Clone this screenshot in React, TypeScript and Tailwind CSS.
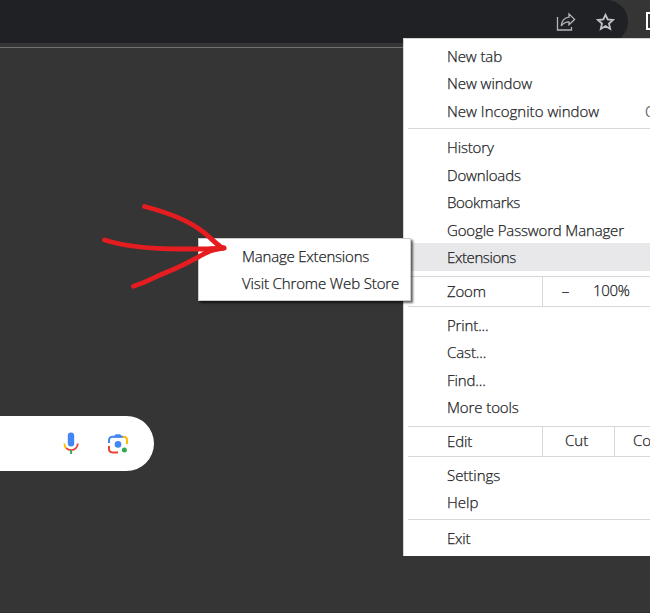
import type { ReactNode } from "react";

type ItemProps = { label: string; active?: boolean; raised?: boolean; tracking?: string; shortcut?: string };

function Item({ label, active, raised, tracking = "", shortcut }: ItemProps) {
  return (
    <div
      className={`flex h-[27.5px] shrink-0 items-center justify-between pl-[43px] ${raised ? "pb-[1.5px]" : ""} ${active ? "bg-[#e8e8ea] shadow-[0_-1px_0_#e8e8ea]" : ""}`}
    >
      <span className={tracking}>{label}</span>
      {shortcut && <span className="w-[5px] shrink-0 overflow-hidden text-[#777]">{shortcut}</span>}
    </div>
  );
}

function Group({ children, className }: { children: ReactNode; className: string }) {
  return <div className={`flex flex-col ${className}`}>{children}</div>;
}

function Line() {
  return <div className="ml-[4px] h-px shrink-0 bg-[#d7d7d7]" />;
}

function ShareIcon() {
  return (
    <svg className="h-5 w-5" viewBox="0 0 20 20" fill="none" stroke="#b4b5b8" strokeWidth="1.3">
      <path d="M1.5 5V18H15.5V15" />
      <path d="M13 2L18.6 7.4L13 12.8V9.8C9.4 9.8 7 11 5.2 14C5.6 9.5 8 5.9 13 5.2Z" />
    </svg>
  );
}

function StarIcon() {
  return (
    <svg className="h-5 w-5" viewBox="0 0 20 20" fill="none" stroke="#c3c4c7" strokeWidth="1.8">
      <path d="M9.5 2.8L11.7 7.5L17 8L13 11.6L14.2 16.9L9.5 14.1L4.8 16.9L6 11.6L2 8L7.3 7.5Z" />
    </svg>
  );
}

function MicIcon() {
  return (
    <svg className="h-6 w-4" viewBox="0 0 16 24" fill="none">
      <rect x="4.8" y="0.5" width="6.4" height="14" rx="3.2" fill="#4285f4" />
      <path d="M1.4 11.5C1.4 13.5 2.1 15.2 3.3 16.4" stroke="#fbbc05" strokeWidth="1.8" />
      <path d="M3.2 16.1C5.8 18.8 10.3 18.8 12.9 16.1C14.1 14.9 14.8 13.3 14.8 11.5" stroke="#ea4335" strokeWidth="1.8" />
      <path d="M8.1 18V22" stroke="#34a853" strokeWidth="2" />
    </svg>
  );
}

function LensIcon() {
  return (
    <svg className="h-[22px] w-[22px]" viewBox="0 0 22 22" fill="none">
      <path d="M2 10V7.3C2 5.2 3.4 3.8 5.5 3.8H16" stroke="#4285f4" strokeWidth="2" />
      <path d="M6.2 4.5L8.6 1.2H13.2L15.8 4.5Z" fill="#4285f4" />
      <path d="M15.8 3.8H16.5C18.6 3.8 20 5.2 20 7.3V11" stroke="#fbbc05" strokeWidth="2" />
      <path d="M2 13V16C2 18.2 3.5 19.4 5.6 19.4H11" stroke="#ea4335" strokeWidth="2" />
      <circle cx="11" cy="11.4" r="3.3" fill="#4285f4" />
      <circle cx="17.4" cy="17" r="2.5" fill="#34a853" />
    </svg>
  );
}

export default function App() {
  return (
    <div className="relative flex h-[613px] w-[650px] flex-col overflow-hidden bg-[#353535] font-['Open_Sans',sans-serif] text-[15px] leading-none font-light text-[#202124] [-webkit-text-stroke:0.25px_#202124]">
      <header className="flex h-[48px] shrink-0 flex-col border-b border-[#707070] bg-[#353535]">
        <div className="flex h-[43px] justify-end">
          <div className="flex w-[628px] items-center justify-end gap-5 rounded-r-[22px] bg-[#202124] pr-3">
            <ShareIcon />
            <StarIcon />
          </div>
          <div className="w-[22px] overflow-hidden pt-[12px] pl-[18px]">
            <div className="h-[18px] w-[16px] border-2 border-white" />
          </div>
        </div>
      </header>

      <main className="flex-1 pt-[368px]">
        <div className="flex h-[55px] w-[154px] items-center justify-end gap-[28px] rounded-r-full bg-white pr-[25px]">
          <MicIcon />
          <LensIcon />
        </div>
      </main>
      <div className="h-px bg-[#302c2e]" />

      <nav className="absolute top-[38px] left-[403px] flex h-[518px] w-[247px] flex-col border-t border-l border-[#d5d5d5] bg-white">
        <Group className="h-[89px] pt-[3.75px]">
          <Item label="New tab" tracking="tracking-[-0.1px]" />
          <Item label="New window" raised tracking="tracking-[-0.05px]" />
          <Item label="New Incognito window" tracking="tracking-[0.02px]" shortcut="Ctrl" />
        </Group>
        <Line />
        <Group className="h-[147px] pt-[4.75px]">
          <Item label="History" tracking="tracking-[-0.15px]" />
          <Item label="Downloads" tracking="tracking-[-0.15px]" />
          <Item label="Bookmarks" tracking="tracking-[-0.3px]" />
          <Item label="Google Password Manager" tracking="tracking-[-0.15px]" />
          <Item label="Extensions" active tracking="tracking-[-0.4px]" />
        </Group>
        <Line />
        <div className="flex h-[29px] shrink-0">
          <div className="flex w-[139px] items-center border-r border-[#d7d7d7] pl-[43px] tracking-[-0.2px]">Zoom</div>
          <div className="flex w-[45px] items-center justify-center pb-[3px]">–</div>
          <div className="flex items-center pb-[3px] pl-[5px] tracking-[-0.3px]">100%</div>
        </div>
        <Line />
        <Group className="h-[119px] pt-[4.75px]">
          <Item label="Print..." tracking="tracking-[-0.15px]" />
          <Item label="Cast..." raised tracking="tracking-[-0.1px]" />
          <Item label="Find..." tracking="tracking-[-0.1px]" />
          <Item label="More tools" raised tracking="tracking-[-0.1px]" />
        </Group>
        <Line />
        <div className="flex h-[29px] shrink-0">
          <div className="flex w-[139px] items-center border-r border-[#d7d7d7] pl-[43px] tracking-[-0.1px]">Edit</div>
          <div className="flex w-[72px] items-center border-r border-[#d7d7d7] pb-[3px] pl-[22px]">Cut</div>
          <div className="flex flex-1 items-center overflow-hidden pb-[3px] pl-[18px]">Copy</div>
        </div>
        <Line />
        <Group className="h-[62px] pt-[4.75px]">
          <Item label="Settings" tracking="tracking-[-0.03px]" />
          <Item label="Help" raised />
        </Group>
        <Line />
        <Group className="pt-[5px]">
          <Item label="Exit" tracking="tracking-[-0.2px]" />
        </Group>
      </nav>

      <div className="absolute top-[238px] left-[198px] flex h-[63px] w-[213px] flex-col border border-[#ccc] bg-white pt-[3.75px] shadow-[2px_2px_2px_#0009]">
        <Item label="Manage Extensions" tracking="tracking-[-0.2px]" />
        <Item label="Visit Chrome Web Store" raised tracking="tracking-[-0.13px]" />
      </div>

      <svg className="absolute top-[195px] left-[90px] h-[110px] w-[150px]" viewBox="0 0 150 110" fill="none" stroke="#e51c20" strokeWidth="4.8" strokeLinecap="round" strokeLinejoin="round">
        <path d="M54.5 11.5C76 17 96 24 112 36C119 41 125 48 131.5 52.5" />
        <path d="M14.5 45C42 53.5 70 54 90 54H120Q128 54 133 53" />
        <path d="M43.5 91.3C58 86.5 60 84 76 77.5C97 69 109 61 120 56C126 54 130 54 133.5 53" />
        <path d="M120 54L134 53" strokeWidth="5.2" />
      </svg>
    </div>
  );
}
